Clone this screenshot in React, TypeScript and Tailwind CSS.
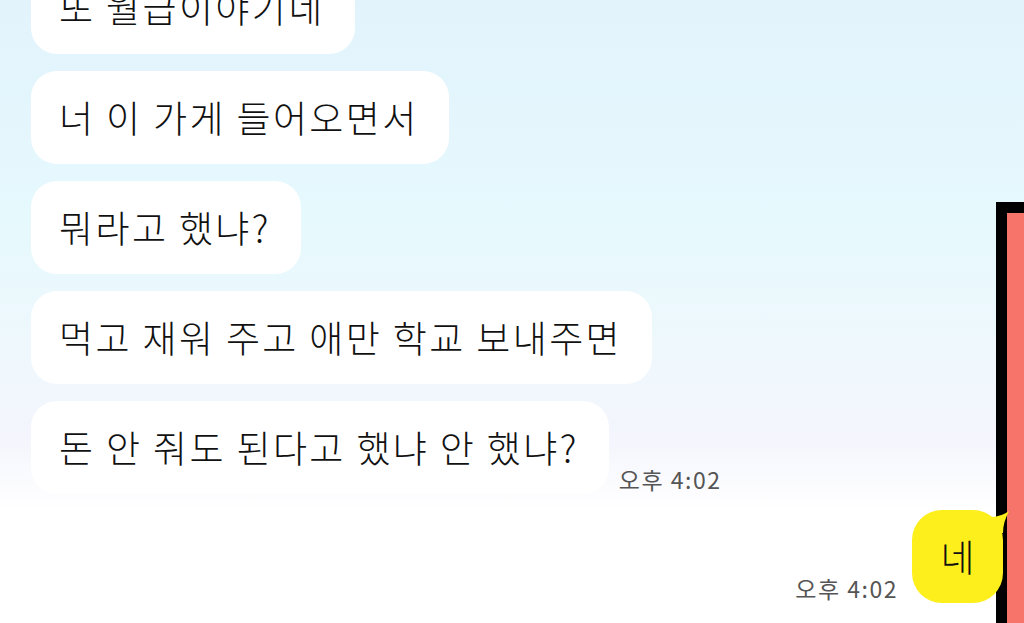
// Chat screen — incoming white bubbles, one outgoing yellow reply

const FONT = { fontFamily: '"Noto Sans CJK KR", "Noto Sans", sans-serif' };

const incoming = [
  '또 월급이야기네',
  '너 이 가게 들어오면서',
  '뭐라고 했냐?',
  '먹고 재워 주고 애만 학교 보내주면',
];

function Bubble({ text }: { text: string }) {
  return (
    <div className="bg-white rounded-[26px] h-[93px] pl-[28px] pr-[30px] flex items-center text-[37px] tracking-[2.4px] font-light text-[#111] whitespace-nowrap">
      {text}
    </div>
  );
}

function Time() {
  return (
    <span className="text-[23px] tracking-[1.5px] text-[#555] leading-none mb-[3px] whitespace-nowrap">
      오후 4:02
    </span>
  );
}

export default function App() {
  return (
    <div
      className="relative w-[1024px] h-[623px] overflow-hidden bg-[linear-gradient(180deg,#e2f3fc_0%,#e6f9fd_35%,#eef8fd_55%,#f4f5fd_70%,#ffffff_82%)]"
      style={FONT}
    >
      {/* red panel peeking in from the right */}
      <div className="absolute left-[996px] top-[202px] w-[60px] h-[460px] bg-[#f7746a] border-[11px] border-black border-r-0" />

      <div className="relative flex flex-col items-start gap-[17px] pl-[31px] mt-[-39px]">
        {incoming.map(t => (
          <Bubble key={t} text={t} />
        ))}

        <div className="flex items-end gap-[10px]">
          <Bubble text="돈 안 줘도 된다고 했냐 안 했냐?" />
          <Time />
        </div>
      </div>

      {/* outgoing */}
      <div className="relative flex items-end justify-end gap-[14px] pr-[21px] mt-[16px]">
        <Time />
        <div className="relative">
          <div className="bg-[#fcef1c] rounded-[30px] w-[91px] h-[93px] flex items-center justify-center text-[37px] font-light text-[#111]">
            네
          </div>
          <svg className="absolute right-[-6px] top-[1px]" width="20" height="22" viewBox="0 0 20 22">
            <path d="M0 6 C8 6 14 4 20 0 C16 8 14 14 14 22 L0 22 Z" fill="#fcef1c" />
          </svg>
        </div>
      </div>
    </div>
  );
}
